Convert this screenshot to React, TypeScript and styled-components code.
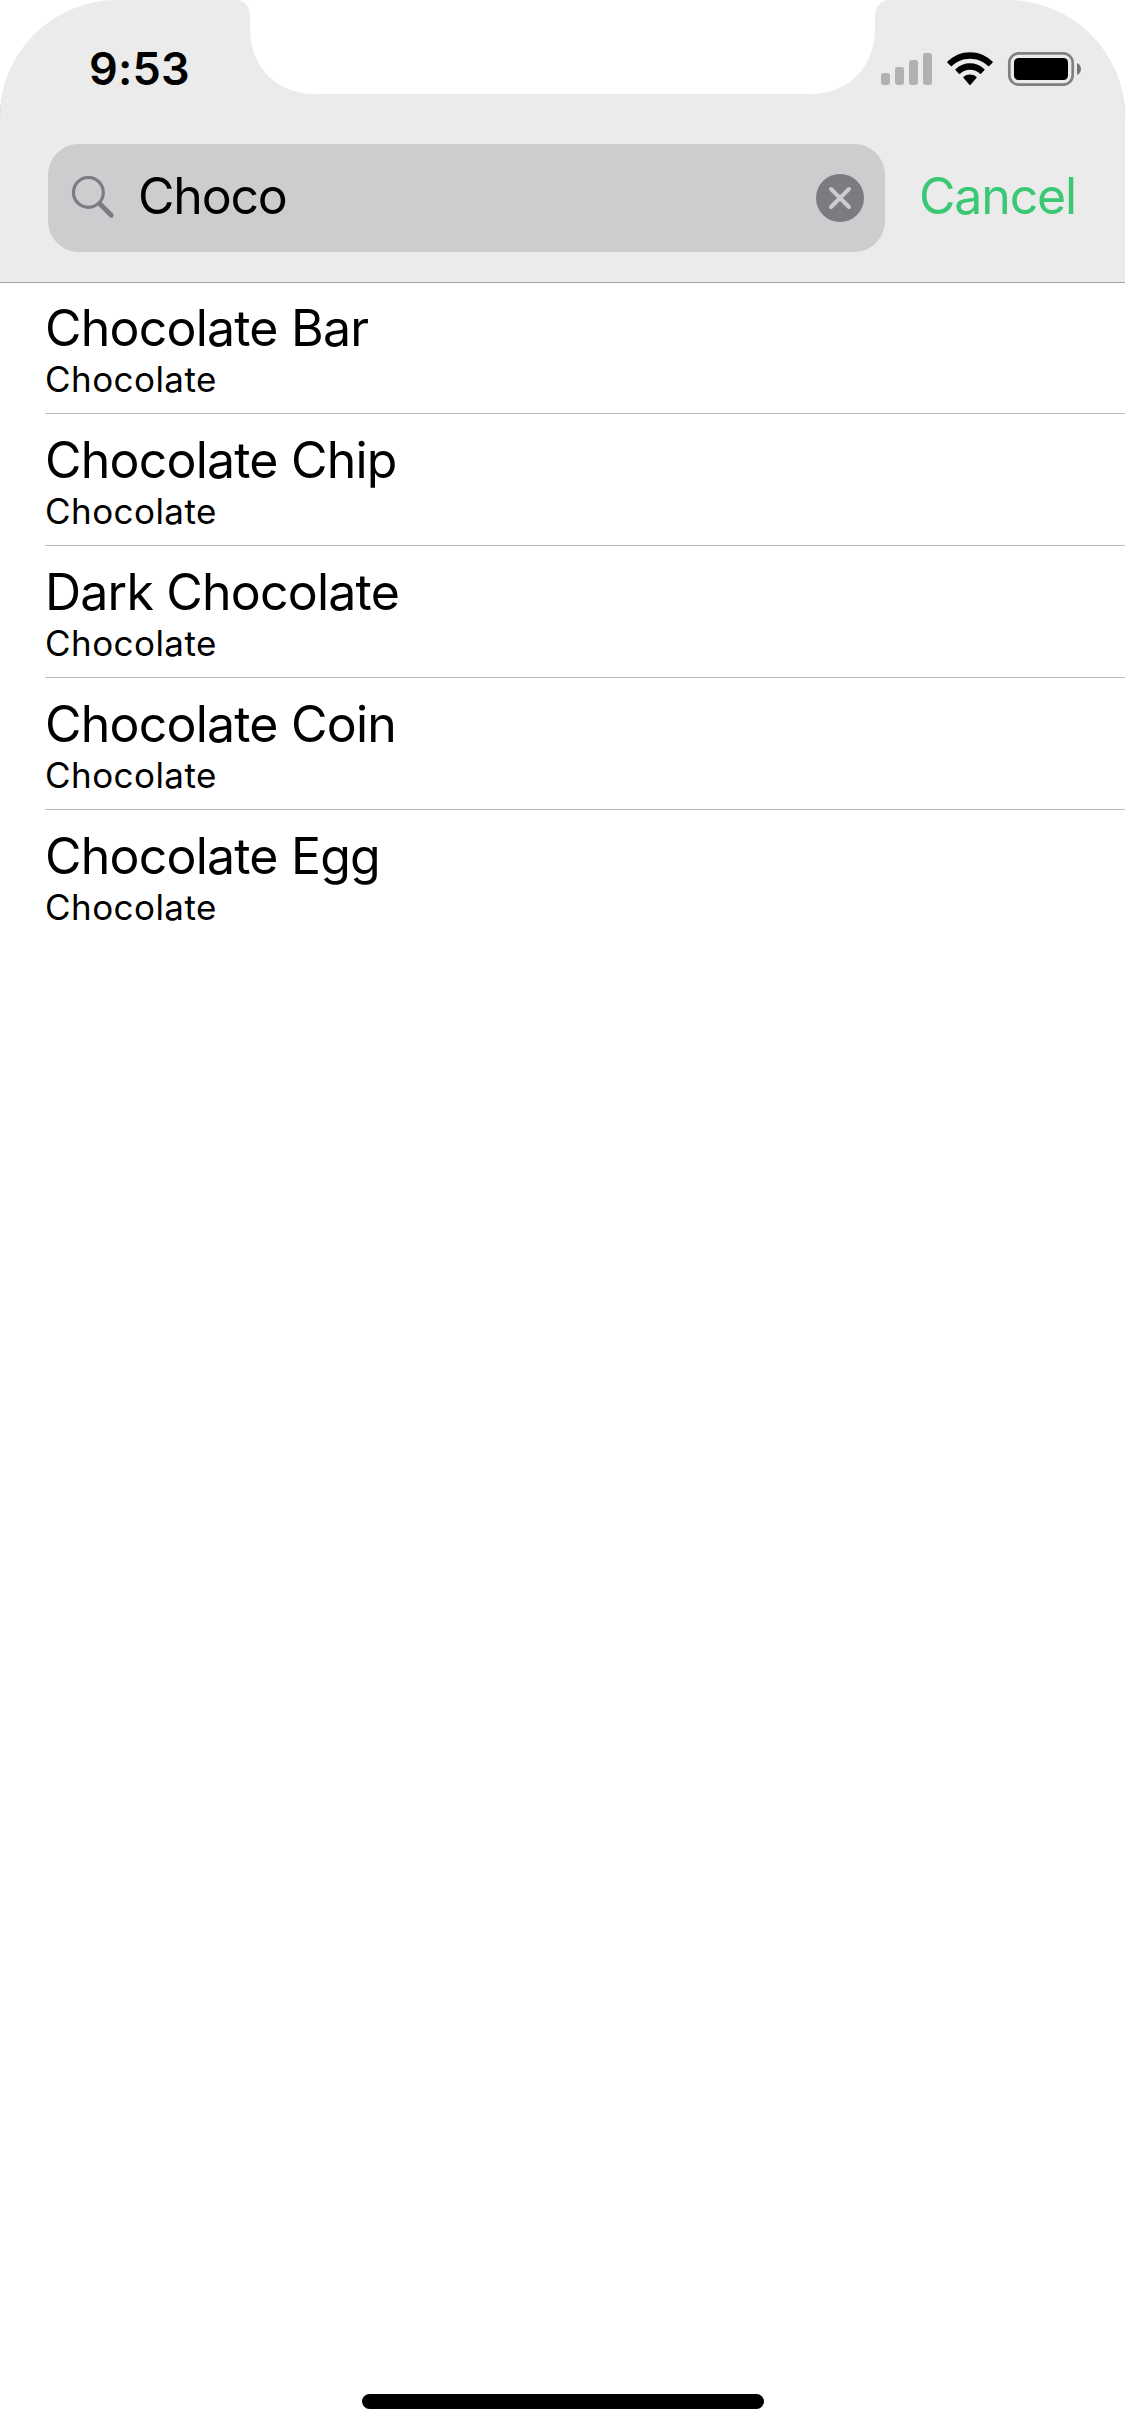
import React from "react";
import styled, { createGlobalStyle } from "styled-components";

const GlobalStyle = createGlobalStyle`
  * { box-sizing: border-box; }
  body { margin: 0; background: #fff; }
`;

const Screen = styled.div`
  display: flex;
  flex-direction: column;
  width: 1125px;
  height: 2436px;
  background: #fff;
  color: #000;
  font-family: Inter, "Liberation Sans", sans-serif;
`;

const Header = styled.header`
  position: relative;
  z-index: 1;
  height: 282px;
  flex: none;
  background: #ebebeb;
  border-radius: 117px 117px 0 0;
  box-shadow: 0 1px 0 #a2a2a2;
`;

const Notch = styled.svg`
  position: absolute;
  top: 0;
  left: 237px;
  width: 651px;
  height: 94px;
  fill: #fff;
`;

const StatusBar = styled.div`
  display: flex;
  justify-content: space-between;
  height: 144px;
  padding: 52px 44px 0 89px;
`;

const Clock = styled.time`
  font-size: 45px;
  font-weight: 600;
  line-height: 34px;
  letter-spacing: 0.2px;
`;

const StatusIcons = styled.svg`
  width: 200px;
  height: 34px;
`;

const SearchRow = styled.div`
  display: flex;
  align-items: center;
  padding: 0 48px;
  gap: 34px;
`;

const SearchField = styled.div`
  display: flex;
  flex: none;
  align-items: center;
  width: 837px;
  height: 108px;
  padding: 0 21px 0 23px;
  border-radius: 31px;
  background: #cdcdd0;
`;

const Icon = styled.svg<{ $size: number }>`
  flex: none;
  width: ${(p) => p.$size}px;
  height: ${(p) => p.$size}px;
`;

const Query = styled.span`
  flex: 1;
  margin-left: 23px;
  padding-bottom: 4px;
  font-size: 50px;
  line-height: 60px;
  letter-spacing: -1.2px;
`;

const Cancel = styled.button`
  flex: none;
  padding: 0 0 4px;
  border: 0;
  background: none;
  color: #3bc874;
  font: inherit;
  font-size: 50px;
  line-height: 60px;
  letter-spacing: -1.15px;
  white-space: nowrap;
`;

const Results = styled.ul`
  flex: 1;
  margin: 0;
  padding: 0 0 0 45px;
  list-style: none;
`;

const Result = styled.li`
  height: 132px;
  padding-top: 16px;
  border-bottom: 1px solid #bcbbbf;
  white-space: nowrap;
  &:last-child { border-bottom-color: transparent; }
`;

const Name = styled.div`
  font-size: 50px;
  line-height: 60px;
  letter-spacing: -0.79px;
`;

const Category = styled.div`
  font-size: 35px;
  line-height: 42px;
  letter-spacing: 0.44px;
`;

const HomeIndicator = styled.div`
  align-self: center;
  flex: none;
  width: 402px;
  height: 15px;
  margin-bottom: 27px;
  border-radius: 8px;
  background: #000;
`;

const candies = ["Chocolate Bar", "Chocolate Chip", "Dark Chocolate", "Chocolate Coin", "Chocolate Egg"];

export default function App() {
  return (
    <Screen>
      <GlobalStyle />
      <Header>
        <Notch viewBox="0 0 651 94">
          <path d="M0 0C8 1 13 7 13 16V28C13 66 38 94 78 94H573C613 94 638 66 638 28V16C638 7 643 1 651 0Z" />
        </Notch>
        <StatusBar>
          <Clock>9:53</Clock>
          <StatusIcons viewBox="881 52 200 34">
            <g fill="#b1b1b1">
              <rect x="881" y="73" width="9" height="12" rx="2.4" />
              <rect x="895" y="67" width="9" height="18" rx="2.4" />
              <rect x="909" y="60" width="9" height="25" rx="2.4" />
              <rect x="923" y="53" width="9" height="32" rx="2.4" />
            </g>
            <path d="M970 58.8C977 58.8 983.400 61.500 988.100 66.100Q988.700 66.600 989.200 66.100L992.500 62.700Q993 62.100 992.500 61.600C980 49 960 49 947.500 61.600Q947 62.100 947.500 62.700L950.800 66.100Q951.300 66.600 951.900 66.100C956.600 61.500 963 58.800 970 58.800Z" />
            <path d="M970 69.800C973.800 69.800 977.300 71.200 980 73.700Q980.600 74.200 981.100 73.700L984.400 70.300Q985 69.700 984.400 69.200C976.300 61.400 963.700 61.400 955.600 69.200Q955 69.700 955.600 70.300L958.900 73.700Q959.400 74.200 960 73.700C962.700 71.200 966.200 69.800 970 69.800Z" />
            <path d="M976.400 77.900Q977 77.300 976.400 76.800C972.700 73.700 967.300 73.700 963.600 76.800Q963 77.300 963.600 77.900L969.400 84.700Q970 85.200 970.600 84.700Z" />
            <rect x="1009.300" y="53.300" width="63.400" height="31.400" rx="9.500" fill="none" stroke="#808080" strokeWidth="2.700" />
            <rect x="1014" y="58" width="54" height="22" rx="4.500" />
            <path d="M1077 63C1082.300 65.200 1082.300 72.800 1077 75Z" fill="#757575" />
          </StatusIcons>
        </StatusBar>
        <SearchRow>
          <SearchField>
            <Icon $size={44} viewBox="71 175 44 44" fill="none" stroke="#7c7b82" strokeLinecap="round">
              <circle cx="88.400" cy="191.400" r="14.900" strokeWidth="3.200" />
              <path d="M100 203L111.300 214.300" strokeWidth="4.800" />
            </Icon>
            <Query>Choco</Query>
            <Icon $size={48} viewBox="0 0 48 48">
              <circle cx="24" cy="24" r="24" fill="#7c7b82" />
              <path d="M15 15L33 33M33 15L15 33" stroke="#cdcdd0" strokeWidth="4" strokeLinecap="round" />
            </Icon>
          </SearchField>
          <Cancel>Cancel</Cancel>
        </SearchRow>
      </Header>
      <Results>
        {candies.map((name) => (
          <Result key={name}>
            <Name>{name}</Name>
            <Category>Chocolate</Category>
          </Result>
        ))}
      </Results>
      <HomeIndicator />
    </Screen>
  );
}
